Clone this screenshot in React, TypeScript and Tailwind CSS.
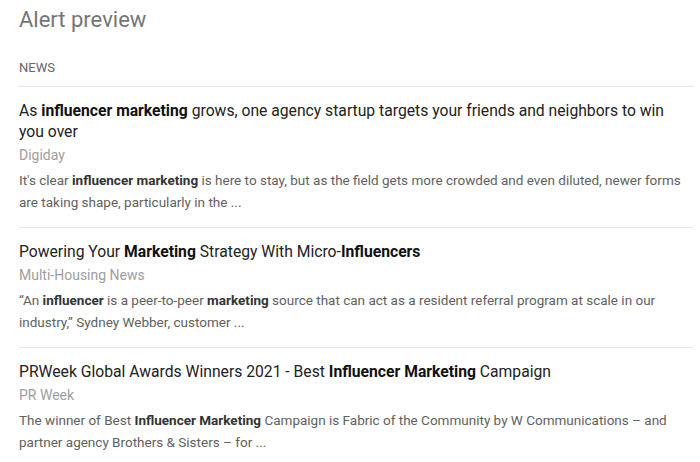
import React from "react";

type Seg = { t: string; b?: boolean };

const items: { title: Seg[]; source: string; snippet: Seg[] }[] = [
  {
    title: [
      { t: "As " },
      { t: "influencer marketing", b: true },
      { t: " grows, one agency startup targets your friends and neighbors to win you over" },
    ],
    source: "Digiday",
    snippet: [
      { t: "It's clear " },
      { t: "influencer marketing", b: true },
      { t: " is here to stay, but as the field gets more crowded and even diluted, newer forms are taking shape, particularly in the ..." },
    ],
  },
  {
    title: [
      { t: "Powering Your " },
      { t: "Marketing", b: true },
      { t: " Strategy With Micro-" },
      { t: "Influencers", b: true },
    ],
    source: "Multi-Housing News",
    snippet: [
      { t: "\u201cAn " },
      { t: "influencer", b: true },
      { t: " is a peer-to-peer " },
      { t: "marketing", b: true },
      { t: " source that can act as a resident referral program at scale in our industry,\u201d Sydney Webber, customer ..." },
    ],
  },
  {
    title: [
      { t: "PRWeek Global Awards Winners 2021 - Best " },
      { t: "Influencer Marketing", b: true },
      { t: " Campaign" },
    ],
    source: "PR Week",
    snippet: [
      { t: "The winner of Best " },
      { t: "Influencer Marketing", b: true },
      { t: " Campaign is Fabric of the Community by W Communications \u2013 and partner agency Brothers & Sisters \u2013 for ..." },
    ],
  },
];

function Segs({ segs, boldClass }: { segs: Seg[]; boldClass: string }) {
  return (
    <>
      {segs.map((s, i) =>
        s.b ? (
          <span key={i} className={boldClass}>
            {s.t}
          </span>
        ) : (
          <React.Fragment key={i}>{s.t}</React.Fragment>
        )
      )}
    </>
  );
}

export default function App() {
  return (
    <div
      className="w-[700px] h-[462px] overflow-hidden bg-white pl-[19px] pr-[7px]"
      style={{ fontFamily: "Roboto, 'Noto Sans', sans-serif" }}
    >
      <h1 className="pt-[6px] text-[22px] leading-[28px] font-normal text-[#757575]">Alert preview</h1>
      <div className="mt-[25px] text-[13px] leading-[18px] text-[#666] pb-[9px] border-b border-[#e8e8e8]">NEWS</div>
      {items.map((it, i) => (
        <div key={i} className="pt-[13px] pb-[14px] border-b border-[#e8e8e8]">
          <div className="pr-[8px] text-[15.7px] leading-[21px] text-[#222]">
            <Segs segs={it.title} boldClass="font-bold text-[#111]" />
          </div>
          <div className="mt-[3px] text-[14px] leading-[21px] text-[#9e9e9e]">{it.source}</div>
          <div className="mt-[3px] text-[13.5px] leading-[22px] text-[#616161]">
            <Segs segs={it.snippet} boldClass="font-bold text-[#333]" />
          </div>
        </div>
      ))}
    </div>
  );
}
